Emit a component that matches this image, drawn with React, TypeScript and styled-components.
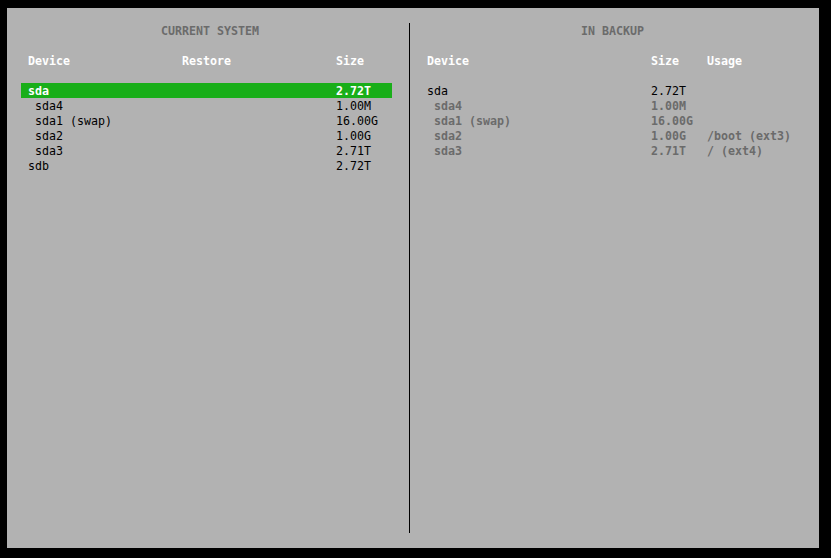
import styled, { createGlobalStyle } from 'styled-components';

const GlobalStyle = createGlobalStyle`
  html, body {
    margin: 0;
    padding: 0;
    background: #000;
  }
  body {
    font-family: "DejaVu Sans Mono", "Liberation Mono", monospace;
    font-size: 11.63px;
    line-height: 17px;
  }
`;

type Tone = 'normal' | 'dim' | 'selected';

interface DiskRow {
  name: string;
  child?: boolean;
  size: string;
  usage?: string;
  tone: Tone;
}

const current: DiskRow[] = [
  { name: 'sda', size: '2.72T', tone: 'selected' },
  { name: 'sda4', child: true, size: '1.00M', tone: 'normal' },
  { name: 'sda1 (swap)', child: true, size: '16.00G', tone: 'normal' },
  { name: 'sda2', child: true, size: '1.00G', tone: 'normal' },
  { name: 'sda3', child: true, size: '2.71T', tone: 'normal' },
  { name: 'sdb', size: '2.72T', tone: 'normal' },
];

const backup: DiskRow[] = [
  { name: 'sda', size: '2.72T', tone: 'normal' },
  { name: 'sda4', child: true, size: '1.00M', tone: 'dim' },
  { name: 'sda1 (swap)', child: true, size: '16.00G', tone: 'dim' },
  { name: 'sda2', child: true, size: '1.00G', usage: '/boot (ext3)', tone: 'dim' },
  { name: 'sda3', child: true, size: '2.71T', usage: '/ (ext4)', tone: 'dim' },
];

function App() {
  return (
    <>
      <GlobalStyle />
      <Screen>
        <LeftPane>
          <Title $indent={140}>CURRENT SYSTEM</Title>
          <Table>
            <HeaderRow $cols="154px 154px 1fr">
              <span>Device</span>
              <span>Restore</span>
              <span>Size</span>
            </HeaderRow>
            {current.map((r) => (
              <Row key={r.name} $cols="154px 154px 1fr" $tone={r.tone}>
                <Name $child={r.child}>{r.name}</Name>
                <span />
                <span>{r.size}</span>
              </Row>
            ))}
          </Table>
        </LeftPane>

        <Divider />

        <RightPane>
          <Title $indent={161}>IN BACKUP</Title>
          <Table>
            <HeaderRow $cols="224px 56px 1fr">
              <span>Device</span>
              <span>Size</span>
              <span>Usage</span>
            </HeaderRow>
            {backup.map((r) => (
              <Row key={r.name} $cols="224px 56px 1fr" $tone={r.tone}>
                <Name $child={r.child}>{r.name}</Name>
                <span>{r.size}</span>
                <span>{r.usage}</span>
              </Row>
            ))}
          </Table>
        </RightPane>
      </Screen>
    </>
  );
}

const Screen = styled.div`
  display: flex;
  width: 812px;
  height: 540px;
  margin: 8px 0 0 7px;
  background: #b2b2b2;
`;

const LeftPane = styled.section`
  width: 399px;
  padding: 15px 0 0 14px;
  box-sizing: border-box;
`;

const RightPane = styled.section`
  flex: 1;
  padding: 15px 0 0 7px;
  box-sizing: border-box;
`;

const Divider = styled.div`
  width: 1px;
  height: 510px;
  margin: 15px 3px 0 3px;
  background: #000;
`;

const Title = styled.h2<{ $indent: number }>`
  margin: 0 0 15px;
  height: 15px;
  padding-left: ${(p) => p.$indent}px;
  font-size: inherit;
  line-height: 17px;
  font-weight: bold;
  color: #6b6b6b;
  white-space: pre;
`;

const Table = styled.div`
  display: flex;
  flex-direction: column;
  width: 371px;
`;

const HeaderRow = styled.div<{ $cols: string }>`
  display: grid;
  grid-template-columns: ${(p) => p.$cols};
  height: 15px;
  padding-left: 7px;
  margin-bottom: 15px;
  color: #fff;
  font-weight: bold;
`;

const toneStyles: Record<Tone, string> = {
  normal: 'color: #000; font-weight: normal;',
  dim: 'color: #6b6b6b; font-weight: bold;',
  selected: 'color: #fff; font-weight: bold; background: #19ae19;',
};

const Row = styled.div<{ $cols: string; $tone: Tone }>`
  display: grid;
  grid-template-columns: ${(p) => p.$cols};
  height: 15px;
  padding-left: 7px;
  white-space: pre;
  ${(p) => toneStyles[p.$tone]}
`;

const Name = styled.span<{ $child?: boolean }>`
  padding-left: ${(p) => (p.$child ? 7 : 0)}px;
`;

export default App;
